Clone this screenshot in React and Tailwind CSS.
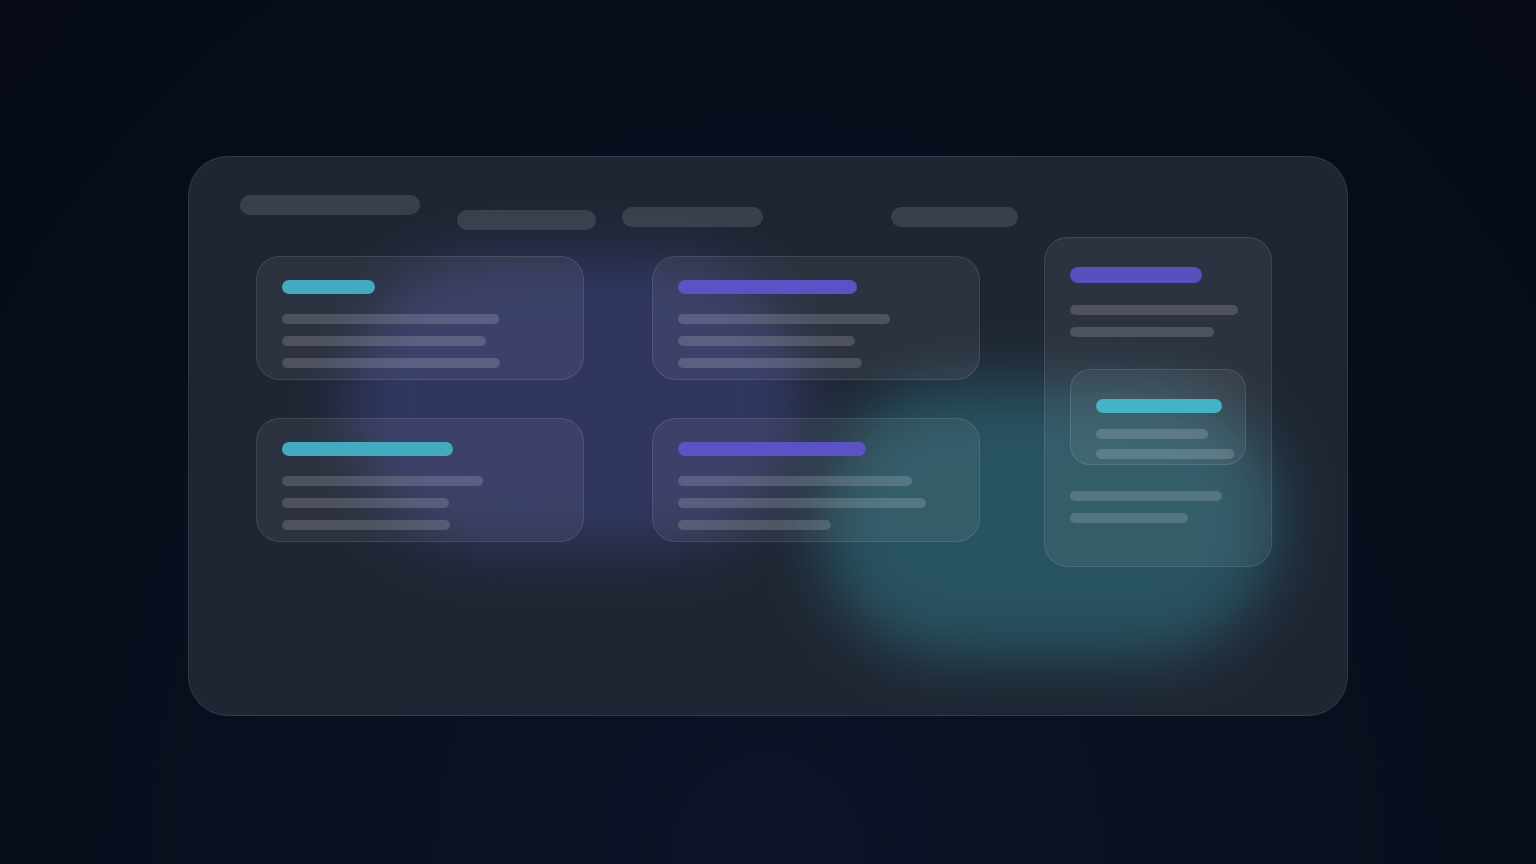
import React from "react";

function Line({ w, className = "" }) {
  return <div className={`h-[10px] rounded-full bg-white/[0.16] ${className}`} style={{ width: w }} />;
}

function Card({ accent, titleW, lines }) {
  const color = accent === "cyan" ? "bg-[#42abc0]" : "bg-[#5b52c6]";
  return (
    <div className="w-[328px] h-[124px] rounded-[24px] border border-white/[0.1] bg-white/[0.06] pl-[25px] pt-[23px]">
      <div className={`h-[14px] rounded-full ${color}`} style={{ width: titleW }} />
      <div className="mt-[20px] flex flex-col gap-[12px]">
        {lines.map((w, i) => (
          <Line key={i} w={w} />
        ))}
      </div>
    </div>
  );
}

export default function App() {
  return (
    <div className="w-full h-[864px] overflow-hidden flex justify-center pt-[156px] bg-[radial-gradient(ellipse_at_50%_100%,#0e1328_0%,#0a1020_40%,#060b17_100%)] font-['Inter',sans-serif]">
      <div className="relative w-[1160px] h-[560px] rounded-[40px] border border-white/[0.09] bg-[#1f2633] overflow-hidden">
        {/* decorative glows */}
        <div className="absolute left-[160px] top-[100px] w-[455px] h-[290px] rounded-[140px] bg-[#3d4280] opacity-60 blur-[28px]" />
        <div className="absolute left-[630px] top-[228px] w-[460px] h-[272px] rounded-full bg-[#2d6675] opacity-70 blur-[30px]" />

        <div className="relative pl-[51px] pt-[38px]">
          {/* header bars */}
          <div className="flex items-start h-[42px]">
            <div className="w-[180px] h-[20px] rounded-full bg-white/[0.12]" />
            <div className="ml-[37px] mt-[15px] w-[139px] h-[20px] rounded-full bg-white/[0.12]" />
            <div className="ml-[26px] mt-[12px] w-[141px] h-[20px] rounded-full bg-white/[0.12]" />
            <div className="ml-[128px] mt-[12px] w-[127px] h-[20px] rounded-full bg-white/[0.12]" />
          </div>

          {/* body */}
          <div className="flex items-start">
            <div className="ml-[16px] mt-[19px] grid grid-cols-[328px_328px] gap-x-[68px] gap-y-[38px]">
              <Card accent="cyan" titleW={93} lines={[217, 204, 218]} />
              <Card accent="purple" titleW={179} lines={[212, 177, 184]} />
              <Card accent="cyan" titleW={171} lines={[201, 167, 168]} />
              <Card accent="purple" titleW={188} lines={[234, 248, 153]} />
            </div>

            <div className="ml-[64px] w-[228px] h-[330px] rounded-[24px] border border-white/[0.1] bg-white/[0.06] pl-[25px] pt-[29px]">
              <div className="w-[132px] h-[16px] rounded-full bg-[#5a4fbe]" />
              <div className="mt-[22px] flex flex-col gap-[12px]">
                <Line w={168} />
                <Line w={144} />
              </div>
              <div className="mt-[32px] w-[176px] h-[96px] rounded-[20px] border border-white/[0.1] bg-white/[0.06] pl-[25px] pt-[29px]">
                <div className="w-[126px] h-[14px] rounded-full bg-[#45b3c6]" />
                <div className="mt-[16px] flex flex-col gap-[10px]">
                  <Line w={112} />
                  <Line w={138} />
                </div>
              </div>
              <div className="mt-[26px] flex flex-col gap-[12px]">
                <Line w={152} />
                <Line w={118} />
              </div>
            </div>
          </div>
        </div>
      </div>
    </div>
  );
}
